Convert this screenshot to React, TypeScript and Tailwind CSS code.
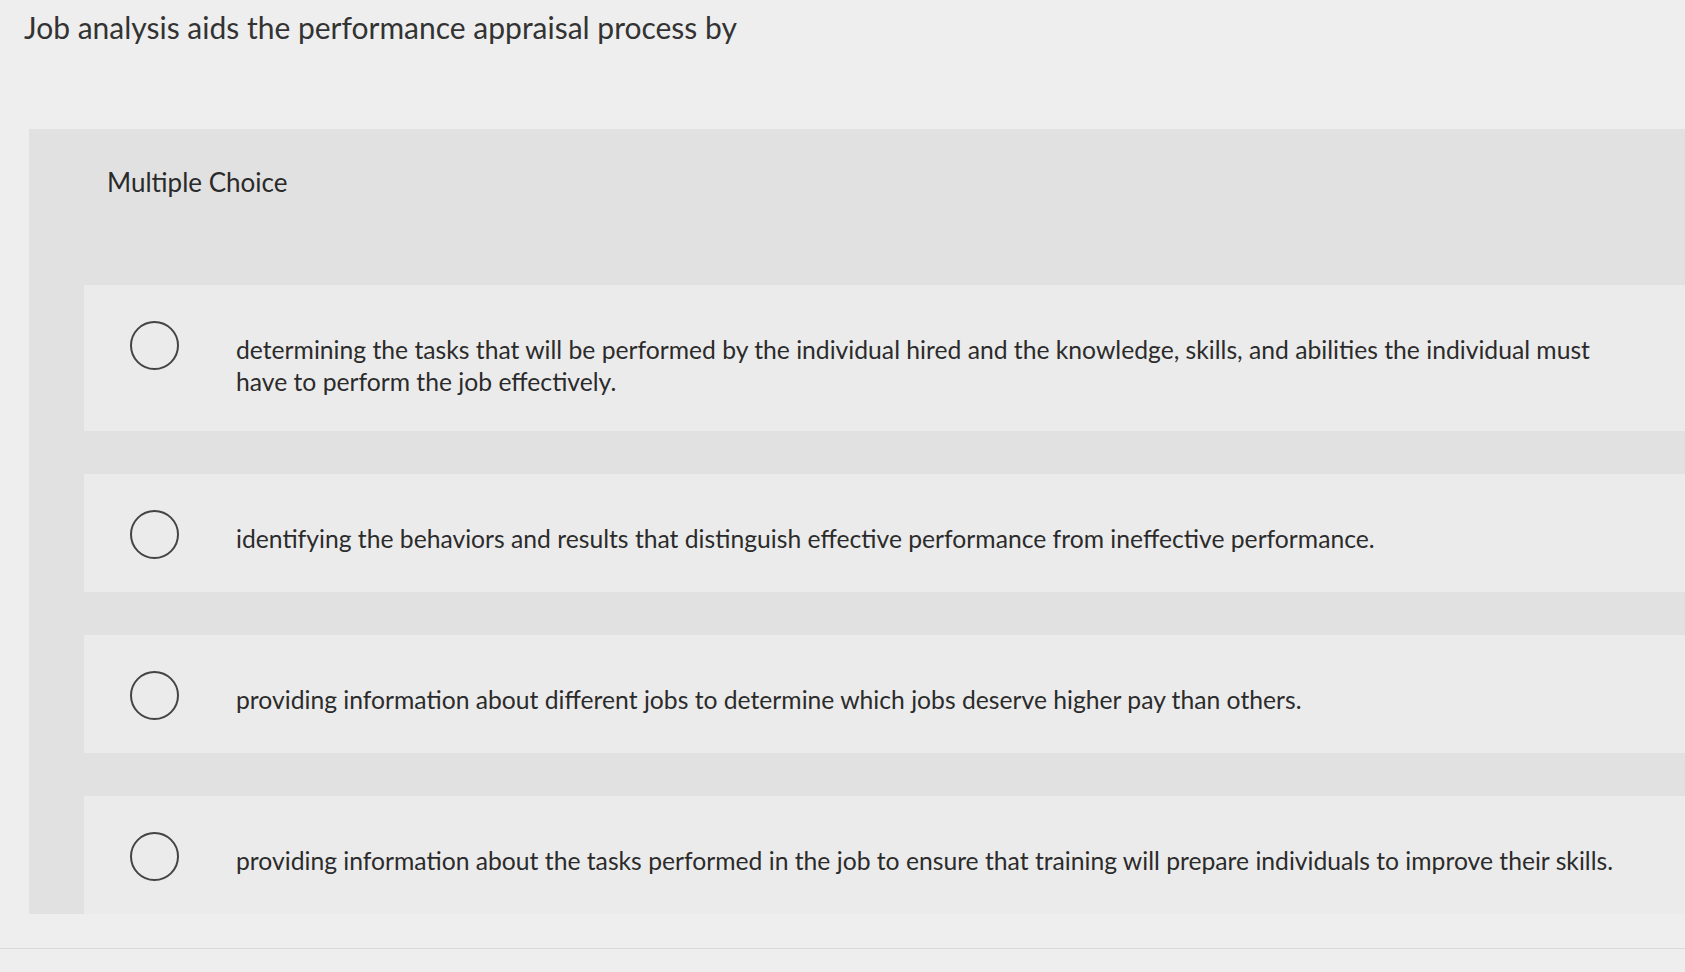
const options = [
  "determining the tasks that will be performed by the individual hired and the knowledge, skills, and abilities the individual must have to perform the job effectively.",
  "identifying the behaviors and results that distinguish effective performance from ineffective performance.",
  "providing information about different jobs to determine which jobs deserve higher pay than others.",
  "providing information about the tasks performed in the job to ensure that training will prepare individuals to improve their skills.",
];

function Radio() {
  return (
    <span className="shrink-0 w-[49px] h-[49px] rounded-full border-2 border-[#444] bg-transparent" />
  );
}

export default function App() {
  return (
    <div
      className="min-h-[972px] w-full overflow-hidden bg-[#eeeeee] text-[#2f2f2f]"
      style={{ fontFamily: "Lato, 'Open Sans', sans-serif" }}
    >
      <h1 className="pl-[24px] pt-[7px] text-[30px] leading-[40px] font-normal text-[#333]">
        Job analysis aids the performance appraisal process by
      </h1>

      <div className="mt-[82px] ml-[29px] bg-[#e1e1e1]">
        <div className="pl-[78px] pt-[38px] pb-[88px] text-[26px] leading-[30px] text-[#2a2a2a]">
          Multiple Choice
        </div>

        <div className="flex flex-col gap-[43px] pl-[55px]">
          {options.map((text, i) => (
            <div key={i} className="flex items-start bg-[#ebebeb] pl-[46px] pr-[40px] pt-[36px] pb-[33px]">
              <Radio />
              <p className="pl-[57px] pt-[13px] max-w-[1460px] text-[24.7px] leading-[32px] text-[#2b2b2b]">
                {text}
              </p>
            </div>
          ))}
        </div>
      </div>

      <div className="mt-[34px] h-px bg-[#d9d9d9]" />
    </div>
  );
}
